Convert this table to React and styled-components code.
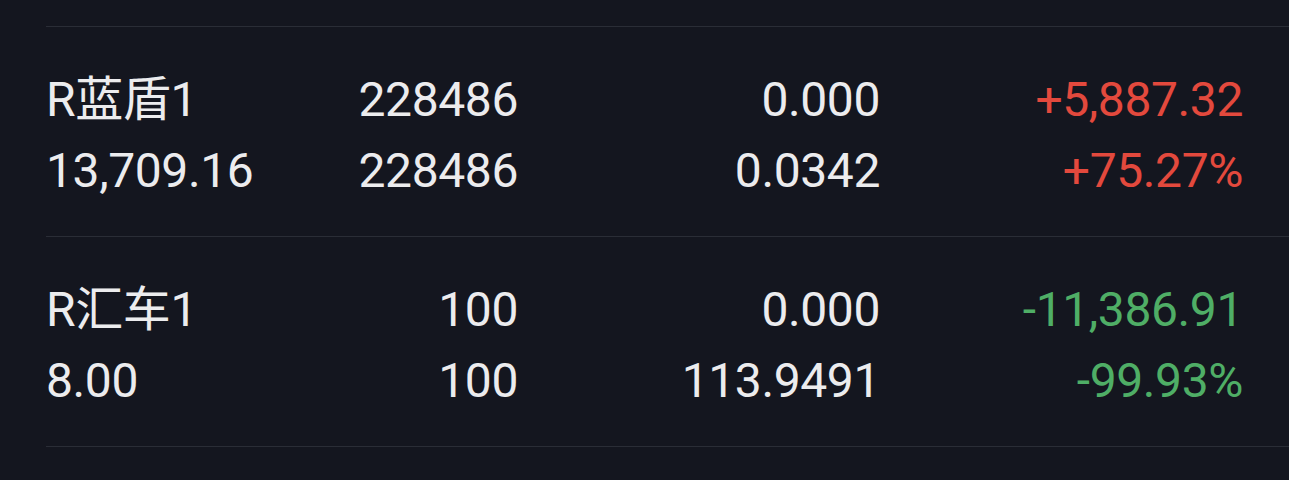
import styled, { createGlobalStyle } from "styled-components";

const GlobalStyle = createGlobalStyle`
  html, body {
    margin: 0;
    padding: 0;
    background: #14161f;
  }
  body {
    font-family: Roboto, "Noto Sans CJK SC", sans-serif;
  }
`;

const colors = {
  bg: "#14161f",
  text: "#ececee",
  line: "#2a2d36",
  up: "#e3493d",
  down: "#4fae66",
};

const rows = [
  {
    name: "R蓝盾1",
    price: "13,709.16",
    qty: "228486",
    avail: "228486",
    now: "0.000",
    cost: "0.0342",
    pnl: "+5,887.32",
    pct: "+75.27%",
    up: true,
  },
  {
    name: "R汇车1",
    price: "8.00",
    qty: "100",
    avail: "100",
    now: "0.000",
    cost: "113.9491",
    pnl: "-11,386.91",
    pct: "-99.93%",
    up: false,
  },
];

const App = () => {
  return (
    <Page>
      <GlobalStyle />
      <List>
        {rows.map((r) => (
          <Row key={r.name}>
            <Cell>{r.name}</Cell>
            <Cell $right>{r.qty}</Cell>
            <Cell $right>{r.now}</Cell>
            <Cell $right $tone={r.up ? "up" : "down"}>
              {r.pnl}
            </Cell>
            <Cell>{r.price}</Cell>
            <Cell $right>{r.avail}</Cell>
            <Cell $right>{r.cost}</Cell>
            <Cell $right $tone={r.up ? "up" : "down"}>
              {r.pct}
            </Cell>
          </Row>
        ))}
      </List>
    </Page>
  );
};

const Page = styled.div`
  width: 1289px;
  height: 480px;
  background: ${colors.bg};
  padding-top: 26px;
  box-sizing: border-box;
  overflow: hidden;
`;

const List = styled.div`
  margin-left: 46px;
  border-top: 1px solid ${colors.line};
`;

const Row = styled.div`
  display: grid;
  grid-template-columns: 250px 222px 362px 363px;
  grid-auto-rows: 71px;
  align-items: center;
  padding: 37px 46px 30px 0;
  border-bottom: 1px solid ${colors.line};
`;

const Cell = styled.div`
  font-size: 48px;
  letter-spacing: -0.4px;
  line-height: 71px;
  white-space: nowrap;
  text-align: ${(p) => (p.$right ? "right" : "left")};
  color: ${(p) =>
    p.$tone === "up" ? colors.up : p.$tone === "down" ? colors.down : colors.text};
`;

export default App;
